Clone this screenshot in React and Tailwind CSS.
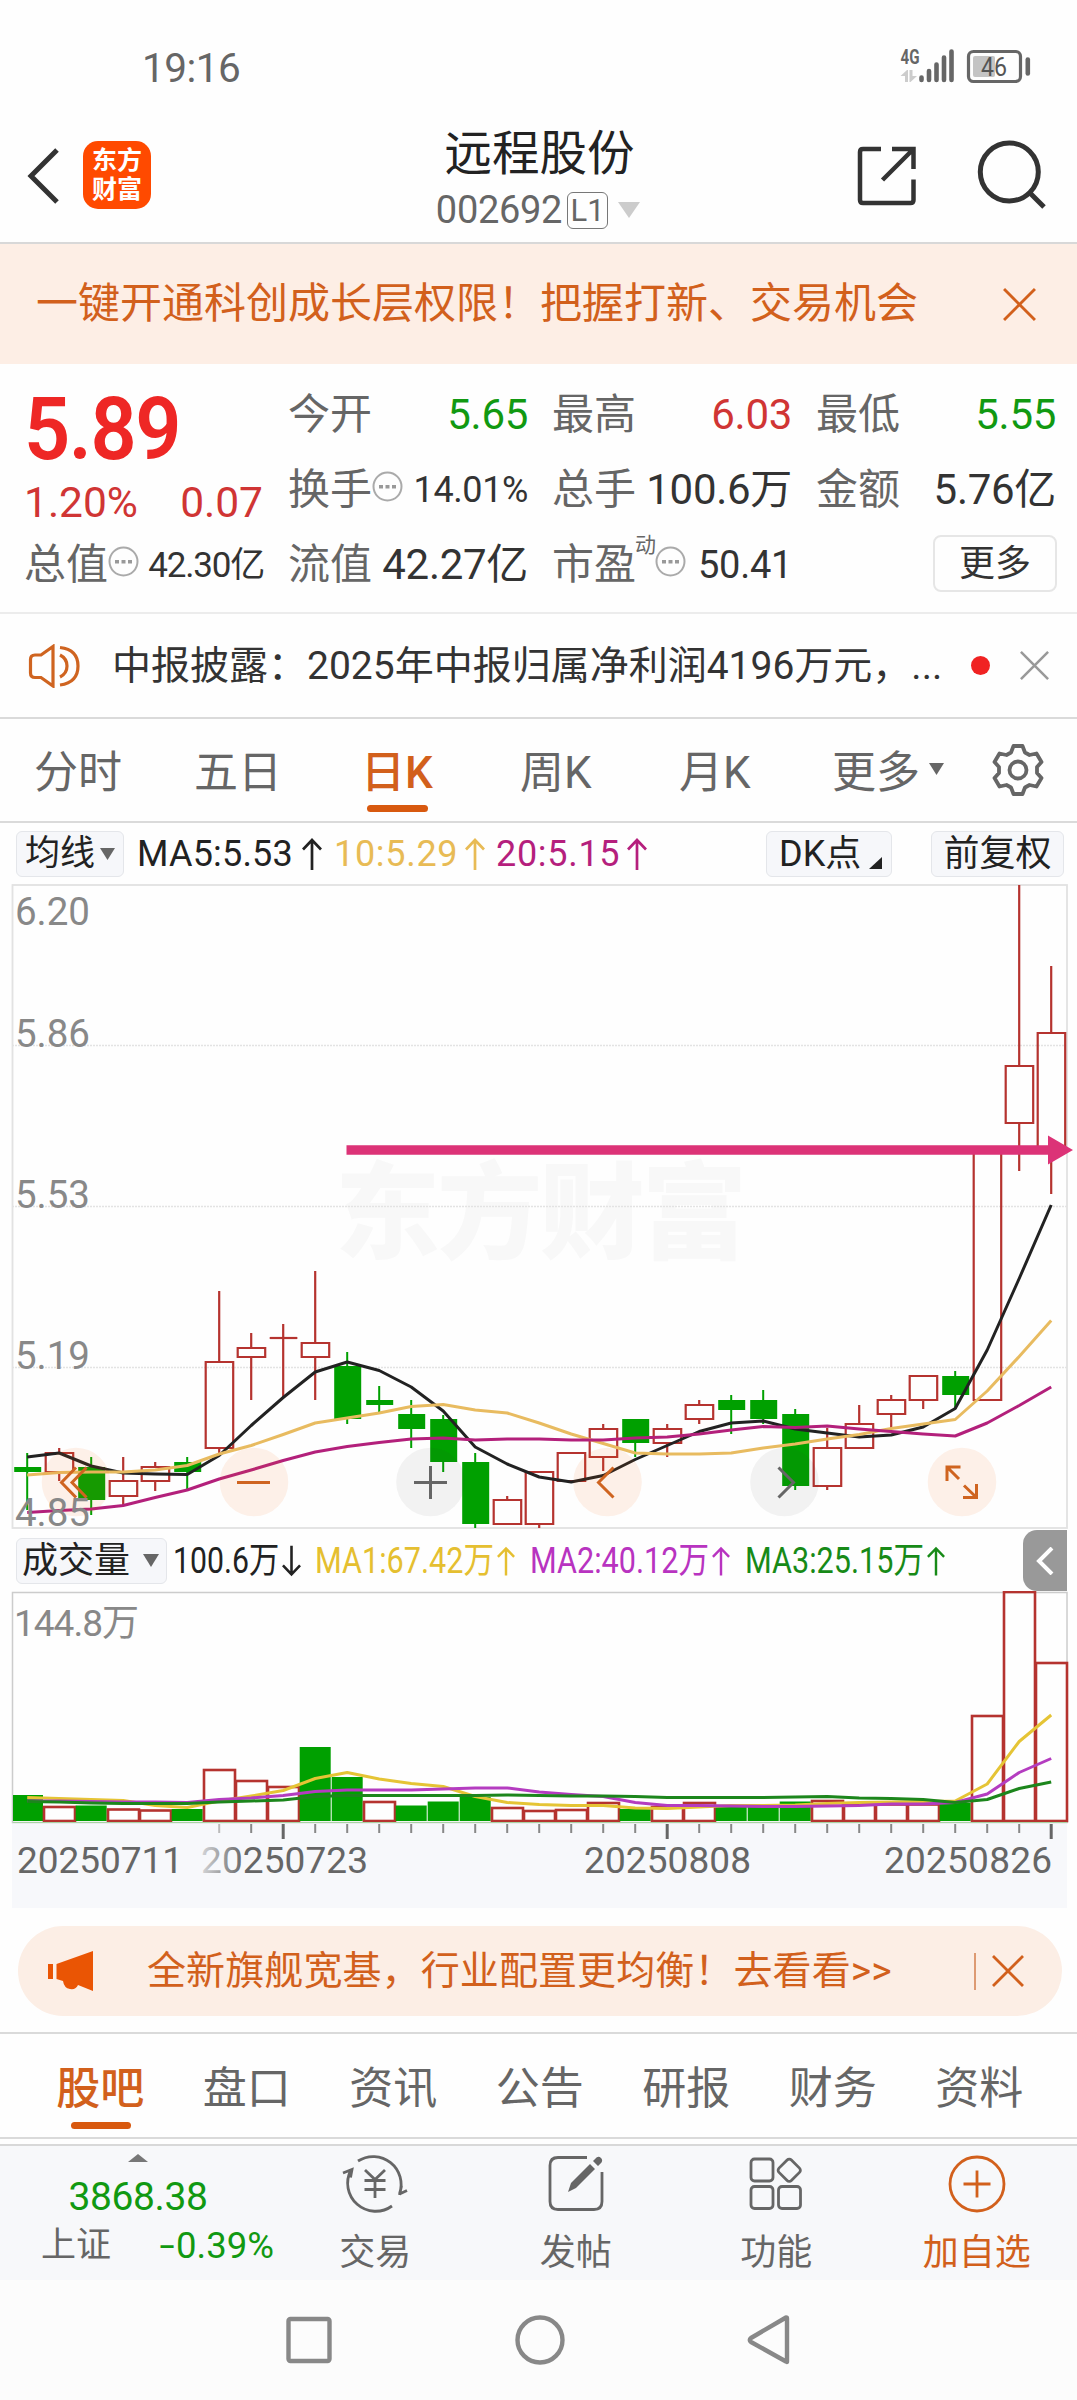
import clsx from 'clsx';

const UP = '#b5332f';
const DOWN = '#00a000';

// [direction, high, low, bodyTop, bodyBottom] in chart pixels
const CANDLES = [
  ['d', 1453, 1510, 1467, 1472],
  ['u', 1448, 1481, 1453, 1472],
  ['d', 1457, 1515, 1467, 1500],
  ['u', 1457, 1505, 1481, 1496],
  ['u', 1462, 1491, 1467, 1481],
  ['d', 1457, 1490, 1462, 1472],
  ['u', 1291, 1453, 1362, 1448],
  ['u', 1333, 1400, 1348, 1357],
  ['u', 1324, 1398, 1338, 1338],
  ['u', 1271, 1400, 1343, 1357],
  ['d', 1352, 1424, 1366, 1419],
  ['d', 1386, 1412, 1400, 1405],
  ['d', 1400, 1448, 1414, 1429],
  ['d', 1415, 1472, 1419, 1462],
  ['d', 1453, 1528, 1462, 1524],
  ['u', 1496, 1524, 1500, 1524],
  ['u', 1472, 1528, 1472, 1524],
  ['u', 1452, 1481, 1453, 1481],
  ['u', 1424, 1471, 1429, 1457],
  ['d', 1419, 1457, 1419, 1443],
  ['u', 1424, 1457, 1429, 1443],
  ['u', 1400, 1424, 1405, 1419],
  ['d', 1395, 1434, 1400, 1410],
  ['d', 1390, 1424, 1400, 1419],
  ['d', 1409, 1490, 1414, 1486],
  ['u', 1428, 1490, 1448, 1486],
  ['u', 1405, 1448, 1424, 1448],
  ['u', 1395, 1428, 1400, 1414],
  ['u', 1376, 1409, 1376, 1400],
  ['d', 1371, 1409, 1376, 1395],
  ['u', 1150, 1400, 1150, 1400],
  ['u', 885, 1171, 1066, 1123],
  ['u', 966, 1194, 1033, 1147],
];

const MA5 = [1457, 1453, 1466, 1473, 1474, 1474.5, 1455.5, 1425.5, 1397.5, 1372, 1362, 1370.5, 1387, 1411, 1447, 1464, 1477, 1482, 1475.5, 1459.5, 1445.5, 1431.5, 1423, 1421, 1429, 1433, 1437, 1435, 1427, 1408.5, 1350, 1278.5, 1205];
const MA10 = [1475, 1472.5, 1472, 1472, 1470, 1465.5, 1454, 1445.5, 1434.5, 1423, 1418, 1413, 1406.5, 1404.5, 1410, 1413, 1423, 1434, 1443.5, 1453, 1454, 1454, 1453, 1448, 1444, 1439, 1434.5, 1428.5, 1424, 1419.5, 1391, 1356.5, 1320.5];
const MA20 = [1512.5, 1510.5, 1509, 1505.5, 1497.5, 1490, 1479, 1470, 1460.5, 1452, 1446.5, 1442.5, 1439, 1438, 1440, 1439, 1439, 1440, 1440, 1438, 1437, 1434, 1430, 1426.5, 1427.5, 1426, 1429, 1431.5, 1434, 1436, 1423, 1405.5, 1387];

const VOLUME_TOPS = [1795, 1807, 1805.5, 1809.5, 1810.5, 1809, 1770, 1781, 1787, 1747, 1777, 1802, 1805.5, 1801.5, 1797, 1808, 1811, 1810, 1803, 1809, 1807, 1803, 1807, 1807, 1801.5, 1801, 1804.5, 1804.5, 1804.5, 1803, 1716, 1592, 1663];
const VOLUME_DOWN = [0, 2, 5, 9, 10, 12, 13, 14, 19, 22, 23, 24, 29];
const VMA1 = [1797.5, 1798.5, 1799.5, 1800.5, 1805.5, 1807.5, 1801, 1796, 1790.5, 1778.5, 1772.5, 1779, 1783.5, 1786.5, 1796.5, 1802.5, 1804.5, 1805.5, 1805.5, 1808, 1808.5, 1807, 1805.5, 1805.5, 1805, 1803.5, 1802.5, 1802, 1801.5, 1801, 1784, 1741.5, 1715];
const VMA2 = [1801, 1801, 1801.5, 1802, 1802, 1802.5, 1799.5, 1798, 1795.5, 1791.5, 1790, 1790, 1790, 1789, 1788, 1788, 1792, 1794.5, 1796.5, 1802.5, 1805.5, 1805.5, 1806, 1806.5, 1806.5, 1806, 1805.5, 1804, 1804, 1802.5, 1794, 1772.5, 1758.5];
const VMA3 = [1801.5, 1802, 1803, 1803.5, 1803.5, 1803.5, 1802, 1801, 1800, 1796.5, 1795.5, 1795.5, 1795.5, 1795.5, 1795.5, 1795, 1795.5, 1796, 1796, 1796.5, 1797.5, 1797.5, 1797.5, 1797.5, 1797, 1796.5, 1798, 1798.5, 1799.5, 1802.5, 1799.5, 1788.5, 1782];

const cx = (i) => 27.2 + i * 32;
const toPoints = (values) => values.map((y, i) => `${cx(i)},${y}`).join(' ');

function StatusBar() {
  return (
    <div className="flex h-[135px] items-start justify-between pr-[46px] pl-[142px] pt-[48px] text-[#666]">
      <span className="text-[40.500px] leading-10 tracking-[-0.500px]">19:16</span>
      <svg className="overflow-visible" width="131" height="44" viewBox="900 47 131 44">
        <text x="900.5" y="63" fontSize="20" fontWeight="700" fill="#666" textLength="19" lengthAdjust="spacingAndGlyphs">4G</text>
        <path d="M900.500 75l6.500-6h1v12h-3v-6zM909.500 69h3v6h4.500l-6.500 6h-1z" fill="#ccc" />
        <path d="M921.500 76.500v2.500M929 70v9M936.500 63.500v15.500M944 56.500v22.500M951.500 50.500v28.500" stroke="#666" strokeWidth="4.600" strokeLinecap="round" />
        <rect x="968.500" y="50.500" width="52" height="30" rx="5" fill="none" stroke="#666" strokeWidth="3.200" />
        <rect x="973" y="55" width="22" height="21" rx="2" fill="#c4c4c4" />
        <path d="M1027.800 58.500v14" stroke="#666" strokeWidth="4.600" strokeLinecap="round" />
        <text x="981" y="74.500" fontSize="25" fill="#555" textLength="26" lengthAdjust="spacingAndGlyphs">46</text>
      </svg>
    </div>
  );
}

function Header() {
  return (
    <header className="flex h-[109px] justify-between border-b-2 border-[#d8d8d8] text-[#222]">
      <div className="flex w-[420px] items-start pt-[6px] pl-[26px]">
        <svg className="mt-[6px]" width="34" height="58" viewBox="0 0 34 58" fill="none" stroke="#333" strokeWidth="5">
          <path d="M31 3L5 29l26 26" />
        </svg>
        <div className="ml-[23px] flex size-[68px] flex-col items-center justify-center rounded-[15px] bg-[#ff4a00] text-[25px] leading-[29px] font-bold text-white">
          <span>东方</span>
          <span>财富</span>
        </div>
      </div>
      <div className="flex flex-col items-center pl-[2px]">
        <h1 className="-mt-[7px] text-[47.500px] leading-[52px] font-normal">远程股份</h1>
        <div className="mt-[10px] flex items-center text-[#666]">
          <span className="text-[38px] leading-10 tracking-[-0.300px]">002692</span>
          <span className="ml-[5px] flex h-[37px] w-[41px] items-center justify-center rounded-md border-[1.500px] border-[#777] text-[31px] leading-none">L1</span>
          <svg className="mr-[3px] ml-[10px]" width="22" height="17"><path d="M0 0h22L11 16z" fill="#ccc" /></svg>
        </div>
      </div>
      <div className="flex w-[420px] items-start justify-end pr-[31px] pt-[5px]">
        <svg className="mt-[5px]" width="62" height="62" viewBox="856 145 62 62" fill="none" stroke="#333" strokeWidth="4.500">
          <path d="M881 149h-18q-3 0-3 3v48q0 3 3 3h47.500q3 0 3-3V179.500" />
          <path d="M892 149h21.500v20M913 149.500L882.500 180" />
        </svg>
        <svg className="ml-[58px]" width="70" height="72" viewBox="976 140 70 72" fill="none" stroke="#333" strokeWidth="5">
          <circle cx="1009.300" cy="172" r="29" />
          <path d="M1029.500 192.500l14.500 14.500" />
        </svg>
      </div>
    </header>
  );
}

function Close({ size, className }) {
  return (
    <svg className={className} width={size} height={size} viewBox="0 0 32 32" fill="none" stroke="currentColor" strokeWidth="2.800">
      <path d="M1 1l30 30M31 1L1 31" />
    </svg>
  );
}

function More() {
  return (
    <svg className="mb-[6px] shrink-0" width="31" height="31" viewBox="0 0 31 31">
      <circle cx="15.500" cy="15.500" r="14" fill="none" stroke="#aaa" strokeWidth="2" />
      <path d="M7 14h4v3.500H7zM13.500 14h4v3.500h-4zM20 14h4v3.500h-4z" fill="#999" />
    </svg>
  );
}

function Stat({ label, value, more, note, tone, size }) {
  return (
    <div className="flex h-[75px] items-center">
      <span className="pt-px text-[42px] leading-none whitespace-nowrap text-[#666]">{label}</span>
      {note && <span className="-mx-px self-start pt-[8px] text-[21px] leading-none text-[#666]">{note}</span>}
      {more && <More />}
      <span
        className={clsx(
          '-mr-[2px] ml-auto pt-px leading-none whitespace-nowrap',
          size || 'text-[42px] tracking-[-0.300px]',
          tone || 'text-[#333]',
        )}
      >
        {value}
      </span>
    </div>
  );
}

function Quote() {
  return (
    <section className="flex h-[250px] gap-[26px] border-b-2 border-[#ececec] pt-[13px] pl-[24px]">
      <div className="w-[238px]">
        <div className="flex h-[104px] items-center text-[88px] leading-none font-semibold text-[#ee2725]">
          <span className="origin-left scale-x-[0.920] tracking-[-1.500px]">5.89</span>
        </div>
        <div className="-mr-px flex h-[44px] items-center justify-between text-[42.500px] leading-none text-[#d03534]">
          <span>1.20%</span>
          <span>0.07</span>
        </div>
        <div className="pt-[2px]">
          <Stat label="总值" value="42.30亿" more size="text-[35px] tracking-[-1.200px]" />
        </div>
      </div>
      <div className="grid h-[225px] grid-cols-[238px_238px_238px] gap-x-[26px]">
        <Stat label="今开" value="5.65" tone="text-[#119911]" />
        <Stat label="最高" value="6.03" tone="text-[#d03534]" />
        <Stat label="最低" value="5.55" tone="text-[#119911]" />
        <Stat label="换手" value="14.01%" more size="text-[36px] tracking-[-0.400px]" />
        <Stat label="总手" value="100.6万" />
        <Stat label="金额" value="5.76亿" />
        <Stat label="流值" value="42.27亿" />
        <Stat label="市盈" note="动" value="50.41" more size="text-[38px] tracking-[-0.300px]" />
        <div className="flex h-[75px] items-center justify-end">
          <button className="-mr-[3px] mb-[2px] h-[57px] w-[124px] rounded-lg border-2 border-[#e6e6e6] text-[36px] leading-none text-[#333]">更多</button>
        </div>
      </div>
    </section>
  );
}

function News() {
  return (
    <div className="flex h-[105px] items-center border-b-2 border-[#dadada] text-[#333]">
      <svg className="ml-[28px]" width="53" height="44" viewBox="28 642 53 44" fill="none" stroke="#cf6420" strokeWidth="3.200">
        <path d="M53 644.500v39.500l-12-8.500h-6q-4.500 0-4.500-4.500v-13.500q0-4.500 4.500-4.500h6zM60 653q7 3.500 7 11t-7 11M60 645.500q18 2 18 18.500t-18 19" />
      </svg>
      <span className="ml-[31px] pt-px text-[39px] leading-none whitespace-nowrap">
        中报披露：2025年中报归属净利润4196万元，...
      </span>
      <span className="mr-[30px] ml-auto size-[19px] rounded-full bg-[#f02222]" />
      <Close size={29} className="mr-[28px] text-[#999]" />
    </div>
  );
}

function PeriodTabs() {
  return (
    <nav className="flex h-[104px] items-center border-b-2 border-[#dadada] pt-[6px] pl-[34px] text-[44px] leading-none text-[#666]">
      <span className="w-[160px]">分时</span>
      <span className="w-[167px]">五日</span>
      <span className="relative w-[159px] font-medium text-[#d2601c]">
        日K
        <i className="absolute top-[54px] left-[6px] h-[7px] w-[61px] rounded-full bg-[#d8590f]" />
      </span>
      <span className="w-[159px]">周K</span>
      <span className="w-[153px]">月K</span>
      <span>更多</span>
      <svg className="mb-[8px] ml-[9px]" width="15" height="12"><path d="M0 0h15L7.500 12z" fill="#666" /></svg>
      <svg className="mb-[7px] ml-[47px]" width="54" height="54" viewBox="-27 -27 54 54" fill="none" stroke="#666" strokeWidth="3.800" strokeLinejoin="round">
        <path d="M-4.500-24h9l2.500 6.500 4.500 2.500 7-1.500 5 8.500L19-3v6l4.500 5-5 8.500-7-1.500-4.500 2.500-2.500 6.500h-9l-2.500-6.500-4.500-2.500-7 1.500-5-8.500L-19 3v-6l-4.500-5 5-8.500 7 1.500 4.500-2.500z" />
        <circle r="8.500" />
      </svg>
    </nav>
  );
}

function Arrow({ down, className }) {
  return (
    <svg className={clsx('shrink-0', className, down && 'rotate-180')} width="20" height="32" viewBox="0 0 20 32" fill="none" stroke="currentColor" strokeWidth="2.700">
      <path d="M10 32V2M1 11.500L10 2l9 9.500" />
    </svg>
  );
}

function MaBar() {
  return (
    <div className="flex h-[61px] items-center text-[36px] leading-none whitespace-nowrap text-[#222]">
      <span className="ml-4 flex h-[46px] w-[108px] items-center rounded-md border-[1.500px] border-[#e4e6ea] bg-[#f6f7fa] pl-[8px] text-[35px]">
        均线
        <svg className="ml-[5px]" width="15" height="12"><path d="M0 0h15L7.500 12z" fill="#666" /></svg>
      </span>
      <span className="ml-[13px] w-[165px] tracking-[0.200px]">MA5:5.53</span>
      <Arrow />
      <span className="ml-[12px] w-[131px] tracking-[0.700px] text-[#e8bb55]">10:5.29</span>
      <Arrow className="text-[#e8bb55]" />
      <span className="ml-[11px] w-[131px] tracking-[0.700px] text-[#b51f7d]">20:5.15</span>
      <Arrow className="text-[#b51f7d]" />
      <span className="mr-[39px] ml-auto flex h-[46px] w-[126px] items-center rounded-md border-[1.500px] border-[#e4e6ea] bg-[#f6f7fa] pl-[12px]">
        DK点
        <svg className="mt-[20px] ml-[8px]" width="13" height="13"><path d="M13 0v12H0z" fill="#222" /></svg>
      </span>
      <span className="mr-[13px] flex h-[46px] w-[133px] items-center justify-center rounded-md border-[1.500px] border-[#e4e6ea] bg-[#f6f7fa]">前复权</span>
    </div>
  );
}

function Candle({ data, x }) {
  const [dir, high, low, top, bottom] = data;
  if (dir === 'd') {
    return (
      <g fill={DOWN}>
        <rect x={x - 1} y={high} width="2" height={low - high} />
        <rect x={x - 13} y={top} width="27" height={bottom - top} />
      </g>
    );
  }
  return (
    <path
      d={`M${x} ${high}V${top}M${x} ${bottom}V${low}M${x - 13.5} ${top}h27.500V${bottom}h-27.500z`}
      stroke={UP}
      strokeWidth="2.200"
    />
  );
}

function PriceChart() {
  return (
    <svg className="block overflow-visible" width="1077" height="646" viewBox="0 884 1077 646" fill="none">
      <text x="335" y="1250" fontSize="105" fontWeight="900" fill="#f8f8f8" textLength="412">东方财富</text>
      <path d="M12 1045.500H1067M12 1206.500H1067M12 1367.500H1067" stroke="#e3e3e3" strokeWidth="1.500" strokeDasharray="2 1" />
      <rect x="12.500" y="885" width="1054.500" height="643" stroke="#e2e2e2" strokeWidth="1.800" />
      {CANDLES.map((c, i) => (
        <Candle key={i} data={c} x={cx(i)} />
      ))}
      {/* the 8th candle opened and closed level */}
      <path d={`M${cx(8) - 13} 1338h27`} stroke={UP} strokeWidth="2.200" />
      <g strokeWidth="3" strokeLinejoin="round">
        <polyline points={toPoints(MA5)} stroke="#222" />
        <polyline points={toPoints(MA10)} stroke="#e8bb60" />
        <polyline points={toPoints(MA20)} stroke="#b3207b" />
      </g>
      {/* floating zoom and pan controls */}
      <g fill="#f5600f" fillOpacity="0.090">
        <circle cx="76" cy="1482" r="34.300" />
        <circle cx="254" cy="1482" r="34.300" />
        <circle cx="607.500" cy="1482" r="34.300" />
        <circle cx="962" cy="1482" r="34.300" />
      </g>
      <g fill="#333" fillOpacity="0.060">
        <circle cx="430.500" cy="1482" r="34.300" />
        <circle cx="784.500" cy="1482" r="34.300" />
      </g>
      <g stroke="#cf6420" strokeWidth="3">
        <path d="M76 1467.500L61.500 1482.500L76 1497.500M86.500 1467.500L72 1482.500L86.500 1497.500M237 1482.500h33M613.500 1467.500L598.500 1482.500L613.500 1497.500" />
        <path d="M947 1481v-14h13.500M947.500 1467.500L959 1479M976.500 1484v13.500h-13.500M964 1485.500L976 1497" />
      </g>
      <path d="M414 1482.500h33M430.500 1466v33M778.500 1467.500L793.500 1482.500L778.500 1497.500" stroke="#666" strokeWidth="3" />
      <g fill="#888" fontSize="38.500">
        <text x="15" y="924.500" textLength="75">6.20</text>
        <text x="15" y="1047" textLength="75">5.86</text>
        <text x="15" y="1208" textLength="75">5.53</text>
        <text x="15" y="1369" textLength="75">5.19</text>
        <text x="15" y="1526" textLength="75">4.85</text>
      </g>
      <path d="M346.500 1145.300H1048V1135.500L1073 1150L1048 1164.500V1154.700H346.500z" fill="#dc3377" />
    </svg>
  );
}

function Vma({ children, className }) {
  return (
    <span className={clsx('flex items-center', className)}>
      <span className="flex w-[178px]">
        <span className="origin-left scale-x-[0.850]">{children}</span>
      </span>
      <Arrow className="ml-[4px] w-[18px]" />
    </span>
  );
}

function VolumeBar() {
  return (
    <div className="flex h-[61px] items-center text-[36px] leading-none whitespace-nowrap">
      <span className="ml-4 flex h-[46px] w-[151px] items-center rounded-md border-[1.500px] border-[#e4e6ea] bg-[#f6f7fa] pl-[5px] text-[#222]">
        成交量
        <svg className="ml-[13px]" width="16" height="13"><path d="M0 0h16L8 13z" fill="#666" /></svg>
      </span>
      <span className="ml-[6px] flex w-[109px] text-[#222]">
        <span className="origin-left scale-x-[0.840]">100.6万</span>
      </span>
      <Arrow down className="w-[19px] text-[#222]" />
      <Vma className="ml-[14px] text-[#e5bf30]">MA1:67.42万</Vma>
      <Vma className="ml-[15px] text-[#b833c0]">MA2:40.12万</Vma>
      <Vma className="ml-[15px] text-[#178a17]">MA3:25.15万</Vma>
      <span className="mr-[10px] ml-auto flex h-[61px] w-[44px] items-center justify-center rounded-l-[14px] bg-[#999]">
        <svg width="18" height="28" viewBox="0 0 18 28" fill="none" stroke="#fff" strokeWidth="4"><path d="M16 1L3 14l13 13" /></svg>
      </span>
    </div>
  );
}

function VolumeChart() {
  return (
    <svg className="block" width="1077" height="318" viewBox="0 1591 1077 318" fill="none">
      <defs>
        <linearGradient id="fade" x1="0" x2="1">
          <stop offset="0" stopColor="#f7f8fb" />
          <stop offset="1" stopColor="#f7f8fb" stopOpacity="0" />
        </linearGradient>
      </defs>
      <rect x="12" y="1823" width="1055" height="85" fill="#f7f8fb" />
      <rect x="12.500" y="1592.500" width="1054.500" height="230" stroke="#ccc" strokeWidth="1.500" />
      {VOLUME_TOPS.map((top, i) =>
        VOLUME_DOWN.includes(i) ? (
          <rect key={i} x={Math.max(cx(i) - 15.5, 13)} y={top} width={i ? 31 : 30} height={1821 - top} fill={DOWN} />
        ) : (
          <rect key={i} x={cx(i) - 15.2} y={top} width="31" height={1821 - top} stroke={UP} strokeWidth="2.600" />
        ),
      )}
      <path d="M13 1822.500H1067" stroke="#a9d3a4" strokeWidth="1" />
      <g strokeWidth="3" strokeLinejoin="round">
        <polyline points={toPoints(VMA1)} stroke="#e5c435" />
        <polyline points={toPoints(VMA2)} stroke="#b43cc0" />
        <polyline points={toPoints(VMA3)} stroke="#1c861c" />
      </g>
      {VOLUME_TOPS.map((_, i) => {
        if (i < 6) return null;
        const major = i % 12 === 8;
        return <path key={i} d={`M${cx(i)} 1824v${major ? 15 : 9}`} stroke={major ? '#666' : i === 6 ? '#bbb' : '#888'} strokeWidth={major ? 3 : 2} />;
      })}
      <text x="14" y="1636" fontSize="37" fill="#888" textLength="125">144.8万</text>
      <g fill="#666" fontSize="37">
        <text x="17" y="1873" textLength="166">20250711</text>
        <text x="201" y="1873" textLength="167">20250723</text>
        <text x="584" y="1873" textLength="167">20250808</text>
        <text x="884" y="1873" textLength="168">20250826</text>
      </g>
      <rect x="188" y="1840" width="56" height="40" fill="url(#fade)" />
    </svg>
  );
}

function Promo() {
  return (
    <div className="mr-[15px] ml-[18px] mt-[17px] flex h-[90px] items-center rounded-full bg-[#fceee5] text-[#d2601c]">
      <svg className="ml-[30px]" width="46" height="40" viewBox="0 0 46 40" fill="#ea5504">
        <path d="M0 13h5v15H0zM8.500 13L45 0v40l-15-6q-2 5-8 4t-7-8l-6.500-2z" />
      </svg>
      <span className="ml-[53px] pt-px text-[39px] leading-none tracking-[0.100px] whitespace-nowrap">全新旗舰宽基，行业配置更均衡！去看看&gt;&gt;</span>
      <span className="mr-[16px] ml-auto h-[37px] w-[2px] bg-[#dd9a72]" />
      <Close size={32} className="mr-[38px]" />
    </div>
  );
}

function InfoTabs() {
  const tabs = ['股吧', '盘口', '资讯', '公告', '研报', '财务', '资料'];
  return (
    <nav className="mt-4 flex h-[107px] items-center border-y-2 border-[#dadada] pt-[6px] pl-[27px] text-[44px] leading-none text-[#666]">
      {tabs.map((tab, i) => (
        <span key={tab} className={clsx('relative w-[146.500px] text-center', i === 0 && 'font-medium text-[#d2601c]')}>
          {tab}
          {i === 0 && <i className="absolute top-[55px] left-[44px] h-[7px] w-[60px] rounded-full bg-[#d8590f]" />}
        </span>
      ))}
    </nav>
  );
}

function Tool({ label, children, className }) {
  return (
    <div className={clsx('flex w-[201.500px] flex-col items-center text-[36px] leading-none', className || 'text-[#666]')}>
      <svg className="mt-[7px]" width="66" height="62" viewBox="-33 -31 66 62" fill="none" stroke="currentColor" strokeWidth="2.800">
        {children}
      </svg>
      <span className="mt-[20px]">{label}</span>
    </div>
  );
}

function BottomBar() {
  return (
    <footer className="mt-[5px] flex h-[136px] border-t-2 border-[#d8d8d8] bg-[#f7f8fa]">
      <div className="flex w-[275px] shrink-0 flex-col items-center text-[#119911]">
        <svg className="mt-[8px]" width="20" height="8"><path d="M0 8h20L10 0z" fill="#777" /></svg>
        <span className="mt-[15px] pl-px text-[39px] leading-10 tracking-[-0.400px]">3868.38</span>
        <div className="mt-[9px] flex w-full items-center justify-between pr-px pl-[41px] text-[36.500px] leading-10">
          <span className="text-[35px] text-[#666]">上证</span>
          <span>
            <span className="mr-[4px] inline-block scale-x-[1.500]">-</span>0.39%
          </span>
        </div>
      </div>
      <Tool label="交易">
        <path d="M-17-23A28 28 0 0 1 24.500 10M24.500 10l7.500-3.500M24.500 11l2-9M17 22A28 28 0 0 1-24-14M-32-11l9-3.500-1.500 8M-10-14L0-4.500 10-14M0-4.500V14M-10.500-3.500h21M-10.500 5.500h21" />
      </Tool>
      <Tool label="发帖">
        <path d="M11-26.500h-29q-8 0-8 8v36q0 8 8 8h36q8 0 8-8V-12" />
        <path d="M-8 8l3-9 19-19 5 5L0 4zM17-23l3.500-3.500q2.500-1.500 4.500.500t.500 4.500L22-18z" fill="currentColor" stroke="none" />
      </Tool>
      <Tool label="功能">
        <rect x="-25" y="-25" width="22" height="22" rx="3.500" />
        <rect x="-25" y="2.500" width="22" height="22" rx="3.500" />
        <rect x="2.500" y="2.500" width="22" height="22" rx="3.500" />
        <rect x="4.500" y="-22.500" width="17.500" height="17.500" rx="3" transform="rotate(45 13.250 -13.750)" />
      </Tool>
      <Tool label="加自选" className="text-[#d2601c]">
        <circle r="27" />
        <path d="M-13.500 0h27M0-13.500v27" />
      </Tool>
    </footer>
  );
}

function SystemNav() {
  return (
    <div className="flex h-[120px] justify-center bg-[#fcfcfc] pt-[33px]">
      <svg width="510" height="54" viewBox="284 2313 510 54" fill="none" stroke="#888" strokeWidth="4.400" strokeLinejoin="round">
        <rect x="288.500" y="2319" width="41" height="42" rx="2" />
        <circle cx="540" cy="2340" r="22.500" />
        <path d="M787 2318.500v43q0 1-1 0l-35-19.500q-2.500-2 0-4l35-20.500q1 0 1 1z" />
      </svg>
    </div>
  );
}

export default function App() {
  return (
    <div className="h-[2400px] w-[1077px] overflow-hidden bg-[#fefefe] font-[Roboto,'Noto_Sans_CJK_SC',sans-serif]">
      <StatusBar />
      <Header />
      <div className="flex h-[120px] items-center justify-between bg-[#fdeee5] pr-[41px] pl-[36px] text-[#d2601c]">
        <span className="text-[42px] leading-none">一键开通科创成长层权限！把握打新、交易机会</span>
        <Close size={33} />
      </div>
      <Quote />
      <News />
      <PeriodTabs />
      <MaBar />
      <PriceChart />
      <VolumeBar />
      <VolumeChart />
      <Promo />
      <InfoTabs />
      <BottomBar />
      <SystemNav />
    </div>
  );
}
